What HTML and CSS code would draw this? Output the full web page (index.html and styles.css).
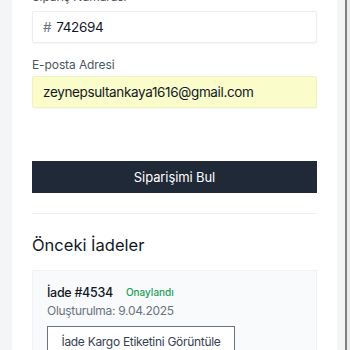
FILE: index.html
```html
<!DOCTYPE html>
<html lang="tr">
<head>
<meta charset="utf-8">
<link rel="stylesheet" href="styles.css">
</head>
<body>
<div class="layout">
  <div class="main">
    <div class="card">
      <div class="field field-first">
        <div class="label">Sipariş Numarası</div>
        <div class="input"><span class="hash">#</span><span class="value">742694</span></div>
      </div>
      <div class="field">
        <div class="label">E-posta Adresi</div>
        <div class="input input-filled"><span class="value">zeynepsultankaya1616@gmail.com</span></div>
      </div>
      <button class="primary">Siparişimi Bul</button>
      <div class="divider"></div>
      <h2 class="heading">Önceki İadeler</h2>
      <div class="return">
        <div class="return-title"><span class="return-id">İade #4534</span><span class="status">Onaylandı</span></div>
        <div class="return-date">Oluşturulma: 9.04.2025</div>
        <button class="outline">İade Kargo Etiketini Görüntüle</button>
      </div>
    </div>
  </div>
  <div class="edge"></div>
  <div class="gutter"></div>
</div>
</body>
</html>
```
FILE: styles.css
```css
* { box-sizing: border-box; }
html, body { margin: 0; height: 100%; }
body {
  background: #f4f5f7;
  font-family: Inter, "Noto Sans", sans-serif;
  color: #111827;
  overflow: hidden;
}
.layout { display: flex; height: 350px; }
.main { flex: 1; padding: 0 8px 0 12px; }
.card {
  background: #fff;
  margin-top: -11px;
  padding: 0 20px 40px;
  height: 400px;
}
.field { margin-bottom: 14px; }
.label {
  font-size: 12px;
  letter-spacing: -0.1px;
  line-height: 16px;
  color: #4b5563;
  margin-bottom: 3px;
}
.field-first .label { margin-bottom: 6px; }
.input {
  height: 32px;
  border: 1px solid #eceef1;
  border-radius: 2px;
  box-shadow: 0 1px 2px rgba(0,0,0,0.04);
  display: flex;
  align-items: center;
  padding: 0 10px;
  font-size: 13.5px;
  letter-spacing: -0.35px;
  background: #fff;
}
.input-filled { background: #fafcc9; border-color: #f0f2c4; }
.hash { color: #6b7280; margin-right: 5px; }
.value { color: #111827; }
.primary {
  display: block;
  width: 100%;
  height: 32px;
  margin-top: 53px;
  background: #1f2937;
  color: #fff;
  border: 0;
  font-family: inherit;
  font-size: 13px;
  letter-spacing: -0.1px;
}
.divider { height: 1px; background: #eceef1; margin-top: 20px; }
.heading {
  margin: 19px 0 13px;
  font-size: 16.5px;
  line-height: 24px;
  font-weight: 400;
  color: #111827;
}
.return {
  background: #f9fafb;
  border: 1px solid #f1f2f4;
  padding: 11px 14px 12px;
}
.return-title { display: flex; align-items: center; gap: 13px; height: 20px; }
.return-id { font-size: 12.5px; letter-spacing: -0.3px; font-weight: 500; }
.status { font-size: 10px; font-weight: 500; color: #22a155; }
.return-date { font-size: 12px; letter-spacing: -0.3px; line-height: 18px; color: #6b7280; }
.outline {
  margin-top: 6px;
  width: 188px;
  height: 30px;
  background: #fff;
  border: 1px solid #6b7280;
  color: #374151;
  font-family: inherit;
  font-size: 12px;
  letter-spacing: -0.3px;
  padding: 0;
}
.edge { width: 2px; background: #808080; }
.gutter { width: 3px; background: #ececec; }
```
